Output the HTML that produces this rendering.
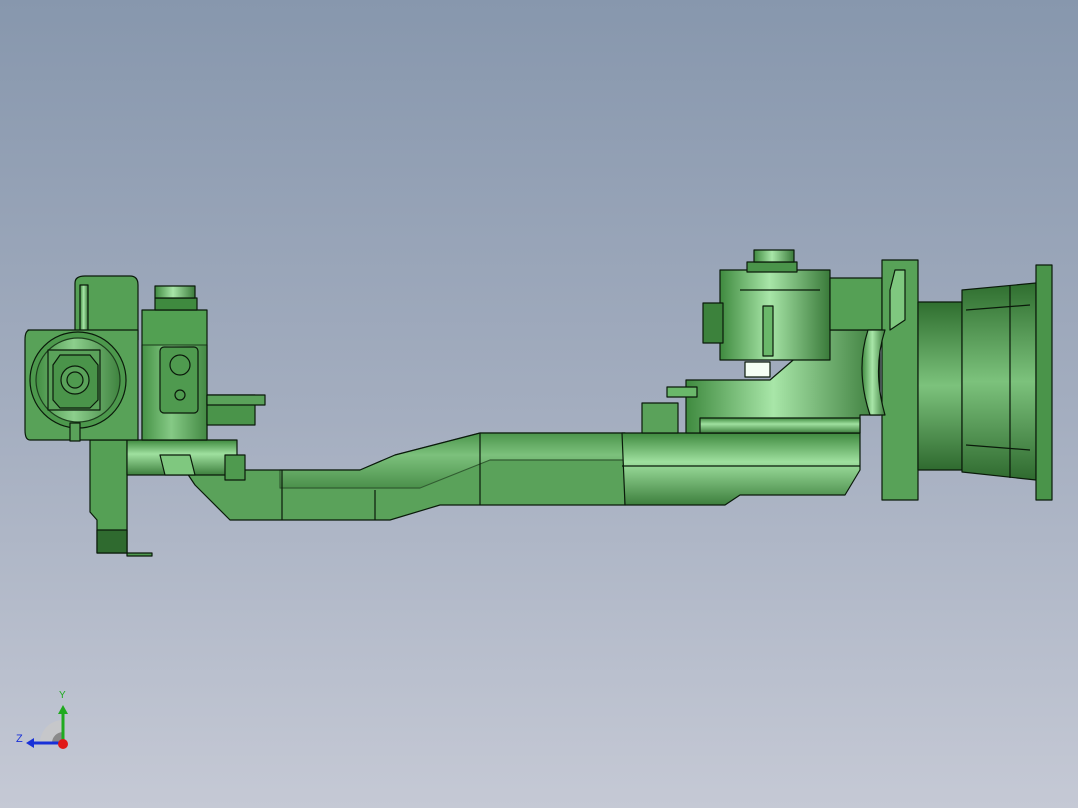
<!DOCTYPE html>
<html><head><style>
html,body{margin:0;padding:0;width:1078px;height:808px;overflow:hidden}
body{background:linear-gradient(#8797ad 0%,#a3adbf 50%,#c5c9d5 100%);font-family:"Liberation Sans",sans-serif}
svg{display:block}
</style></head><body>
<svg width="1078" height="808" viewBox="0 0 1078 808" xmlns="http://www.w3.org/2000/svg">
<defs>
<linearGradient id="gv" x1="0" y1="0" x2="0" y2="1"><stop offset="0" stop-color="#3f8a3f"/><stop offset=".4" stop-color="#9fe09f"/><stop offset="1" stop-color="#3d7f3d"/></linearGradient>
<linearGradient id="gh" x1="0" y1="0" x2="1" y2="0"><stop offset="0" stop-color="#3f8a3f"/><stop offset=".45" stop-color="#a8e6a8"/><stop offset="1" stop-color="#3a7a3a"/></linearGradient>
<linearGradient id="gc" x1="0" y1="0" x2="0" y2="1"><stop offset="0" stop-color="#2f6e2f"/><stop offset=".5" stop-color="#7cc27c"/><stop offset="1" stop-color="#2f6a2f"/></linearGradient>
</defs>
<g stroke="#0a1a0a" stroke-width="1.2" stroke-linejoin="round">
<path d="M90 440 H127 V556 H152 V553 H127 V440 Z" fill="#4f9a4f"/>
<path d="M90 440 H127 V553 H97 V520 L90 512 Z" fill="#55a055"/>
<rect x="97" y="530" width="30" height="23" fill="#2f6a2f"/>
<path d="M185 470 L280 470 L360 470 L395 455 L480 433 L625 433 L625 505 L440 505 L390 520 L230 520 L195 485 Z" fill="#5aa25a"/>
<path d="M280 470 L360 470 L395 455 L480 433 L625 433 L625 460 L490 460 L420 488 L280 488 Z" fill="url(#gv)" opacity=".5"/>
<line x1="282" y1="470" x2="282" y2="520"/><line x1="375" y1="490" x2="375" y2="520"/><line x1="480" y1="433" x2="480" y2="505"/>
<rect x="127" y="440" width="110" height="35" fill="url(#gv)"/>
<path d="M160 455 H190 L195 475 H165 Z" fill="#7fc87f"/>
<rect x="225" y="455" width="20" height="25" fill="#4f9a4f"/>
<path d="M75 283 Q75 276 85 276 H130 Q138 276 138 285 V340 H75 Z" fill="#55a055"/>
<rect x="80" y="285" width="8" height="55" fill="url(#gh)"/>
<rect x="142" y="310" width="65" height="130" fill="#52a052"/>
<rect x="142" y="345" width="65" height="95" fill="url(#gh)" opacity=".6"/>
<rect x="160" y="347" width="38" height="66" rx="4" fill="#4f9a4f"/>
<circle cx="180" cy="365" r="10" fill="#4f9a4f"/>
<circle cx="180" cy="395" r="5" fill="#4f9a4f"/>
<rect x="155" y="298" width="42" height="12" fill="#3f8a3f"/>
<rect x="155" y="286" width="40" height="12" fill="url(#gh)"/>
<rect x="207" y="395" width="48" height="30" fill="#4a944a"/>
<rect x="207" y="395" width="58" height="10" fill="#5aa25a"/>
<path d="M28 330 H138 V440 H30 Q25 440 25 430 V340 Q25 330 30 330 Z" fill="#58a258"/>
<circle cx="78" cy="380" r="48" fill="#4c984c"/>
<circle cx="78" cy="380" r="42" fill="url(#gh)" opacity=".7"/>
<rect x="48" y="350" width="52" height="60" fill="#5aa25a"/>
<polygon points="60,355 90,355 98,365 98,400 90,408 60,408 53,400 53,365" fill="#4a944a"/>
<circle cx="75" cy="380" r="14" fill="#5aa25a"/>
<circle cx="75" cy="380" r="8" fill="#4f9a4f"/>
<rect x="70" y="423" width="10" height="18" fill="#5aa25a"/>
<path d="M622 433 H860 V470 L845 495 H740 L725 505 H625 Z" fill="url(#gv)"/>
<line x1="622" y1="466" x2="860" y2="466"/>
<rect x="642" y="403" width="36" height="30" fill="#5aa25a"/>
<path d="M686 380 H770 L828 330 H880 V415 H860 V433 H686 Z" fill="url(#gh)"/>
<rect x="700" y="418" width="160" height="15" fill="url(#gv)"/>
<rect x="667" y="387" width="30" height="10" fill="#6ab86a"/>
<rect x="720" y="270" width="110" height="90" fill="url(#gh)"/>
<rect x="703" y="303" width="20" height="40" fill="#3c823c"/>
<rect x="745" y="362" width="25" height="15" fill="#f4fff4"/>
<rect x="747" y="262" width="50" height="10" fill="#4a944a"/>
<rect x="754" y="250" width="40" height="12" fill="url(#gh)"/>
<line x1="740" y1="290" x2="820" y2="290"/>
<rect x="763" y="306" width="10" height="50" fill="#6ab86a"/>
<rect x="830" y="278" width="52" height="52" fill="#55a055"/>
<rect x="882" y="260" width="36" height="240" fill="#58a258"/>
<path d="M890 290 L895 270 L905 270 L905 320 L890 330 Z" fill="#7fc87f"/>
<path d="M868 330 Q855 370 870 415 H885 Q872 370 885 330 Z" fill="url(#gh)"/>
<rect x="918" y="302" width="44" height="168" fill="url(#gc)"/>
<path d="M962 290 L1036 283 V480 L962 472 Z" fill="url(#gc)"/>
<line x1="1010" y1="285" x2="1010" y2="478"/>
<path d="M966 310 L1030 305 M966 445 L1030 450" fill="none"/>
<rect x="1036" y="265" width="16" height="235" fill="#4a944a"/>
</g>
<path d="M63 743 L40 743 A23 23 0 0 1 63 720 Z" fill="#c8c8c8" opacity=".8"/>
<path d="M63 743 L52 743 A11 11 0 0 1 63 732 Z" fill="#8a8a8a"/>
<line x1="63" y1="743" x2="63" y2="712" stroke="#1faa1f" stroke-width="3"/>
<polygon points="58,714 68,714 63,705" fill="#1faa1f"/>
<line x1="63" y1="743" x2="33" y2="743" stroke="#1830d8" stroke-width="3"/>
<polygon points="34,738 34,748 26,743" fill="#1830d8"/>
<circle cx="63" cy="744" r="5" fill="#e01818"/>
<text x="59" y="698" font-size="10" fill="#1faa1f">Y</text>
<text x="16" y="742" font-size="11" fill="#1830d8">Z</text>
</svg>
</body></html>
